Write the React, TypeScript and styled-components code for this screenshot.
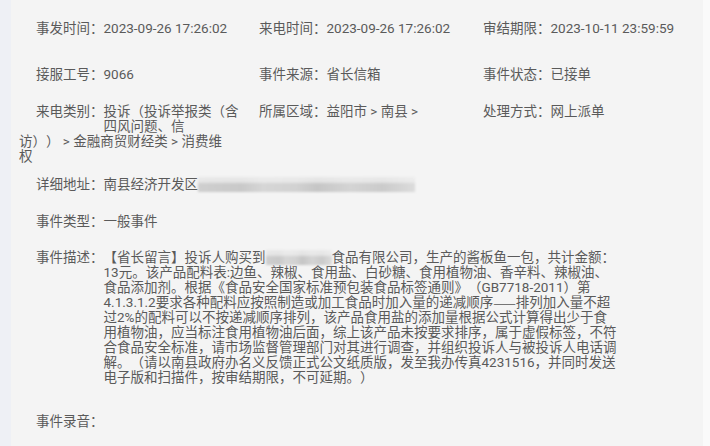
import React from "react";
import styled, { createGlobalStyle } from "styled-components";

const Global = createGlobalStyle`
  html, body { margin: 0; padding: 0; background: #f4f4f4; }
  body { font-family: Roboto, "Noto Sans CJK SC", sans-serif; }
`;

const Page = styled.div`
  display: flex;
  width: 710px;
  height: 446px;
  overflow: hidden;
  background: #f4f4f4;
`;

const LeftStrip = styled.div`
  width: 11px;
  flex: none;
  background: #eef0f5;
`;

const RightStrip = styled.div`
  width: 7px;
  flex: none;
  background: #fafafa;
`;

const Panel = styled.div`
  flex: 1;
  padding: 21px 0 0 8px;
  color: #5a5a5a;
  font-family: Roboto, "Noto Sans CJK SC", sans-serif;
  font-size: 13.5px;
  line-height: 15px;
  text-spacing-trim: space-all;
`;

const GridRow = styled.div<{ $top: number }>`
  display: grid;
  grid-template-columns: 223px 224px 1fr;
  margin-top: ${(p) => p.$top}px;
`;

const Cell = styled.div`
  white-space: nowrap;
`;

const FloatLabel = styled.span<{ $lines?: number }>`
  float: left;
  padding-left: 17px;
  width: 67.5px;
  height: ${(p) => (p.$lines ?? 1) * 15}px;
`;

const WideRow = styled.div<{ $top: number }>`
  display: flex;
  margin-top: ${(p) => p.$top}px;
`;

const Label = styled.div`
  flex: none;
  padding-left: 17px;
  width: 67.5px;
  white-space: nowrap;
`;

const Value = styled.div`
  white-space: nowrap;
`;

const Cjk = styled.span`
  display: inline-block;
  height: 15px;
  line-height: 15px;
  vertical-align: top;
  font-family: "Noto Sans CJK SC", sans-serif;
`;

const Blur = styled.span<{ $w: number }>`
  display: inline-block;
  vertical-align: -3px;
  width: ${(p) => p.$w}px;
  height: 15px;
  background:
    linear-gradient(180deg, rgba(244,244,244,0.75) 0%, rgba(244,244,244,0.6) 35%, rgba(244,244,244,0) 45%),
    linear-gradient(90deg, #cfcfcf 0%, #c9c9c9 20%, #d6d6d6 30%, #d2d2d2 45%, #c6c6c6 55%, #d4d4d4 70%, #cbcbcb 85%, #dcdcdc 100%);
  filter: blur(1.2px);
`;

export default function App() {
  return (
    <Page>
      <Global />
      <LeftStrip />
      <Panel>
        <GridRow $top={0}>
          <Cell>
            <FloatLabel>事发时间：</FloatLabel>2023-09-26 17:26:02
          </Cell>
          <Cell>
            <FloatLabel>来电时间：</FloatLabel>2023-09-26 17:26:02
          </Cell>
          <Cell>
            <FloatLabel>审结期限：</FloatLabel>2023-10-11 23:59:59
          </Cell>
        </GridRow>
        <GridRow $top={31}>
          <Cell>
            <FloatLabel>接服工号：</FloatLabel>9066
          </Cell>
          <Cell>
            <FloatLabel>事件来源：</FloatLabel>省长信箱
          </Cell>
          <Cell>
            <FloatLabel>事件状态：</FloatLabel>已接单
          </Cell>
        </GridRow>
        <GridRow $top={22}>
          <Cell>
            <FloatLabel $lines={2}>来电类别：</FloatLabel>投诉（投诉举报类（含
            <br />
            四风问题、信
            <br />
            访）） &gt; 金融商贸财经类 &gt; 消费维
            <br />权
          </Cell>
          <Cell>
            <FloatLabel>所属区域：</FloatLabel>益阳市 &gt; 南县 &gt;
          </Cell>
          <Cell>
            <FloatLabel>处理方式：</FloatLabel>网上派单
          </Cell>
        </GridRow>
        <WideRow $top={13}>
          <Label>详细地址：</Label>
          <Value>
            南县经济开发区<Blur $w={217} />
          </Value>
        </WideRow>
        <WideRow $top={22}>
          <Label>事件类型：</Label>
          <Value>一般事件</Value>
        </WideRow>
        <WideRow $top={21}>
          <Label>事件描述：</Label>
          <Value>
            【省长留言】投诉人购买到<Blur $w={66} />食品有限公司，生产的酱板鱼一包，共计金额：
            <br />
            13元。该产品配料表:边鱼、辣椒、食用盐、白砂糖、食用植物油、香辛料、辣椒油、
            <br />
            食品添加剂。根据《食品安全国家标准预包装食品标签通则》（GB7718-2011）第
            <br />
            4.1.3.1.2要求各种配料应按照制造或加工食品时加入量的递减顺序<Cjk>——</Cjk>排列加入量不超
            <br />
            过2%的配料可以不按递减顺序排列，该产品食用盐的添加量根据公式计算得出少于食
            <br />
            用植物油，应当标注食用植物油后面，综上该产品未按要求排序，属于虚假标签，不符
            <br />
            合食品安全标准，请市场监督管理部门对其进行调查，并组织投诉人与被投诉人电话调
            <br />
            解。（请以南县政府办名义反馈正式公文纸质版，发至我办传真4231516，并同时发送
            <br />
            电子版和扫描件，按审结期限，不可延期。）
          </Value>
        </WideRow>
        <WideRow $top={29}>
          <Label>事件录音：</Label>
          <Value />
        </WideRow>
      </Panel>
      <RightStrip />
    </Page>
  );
}
